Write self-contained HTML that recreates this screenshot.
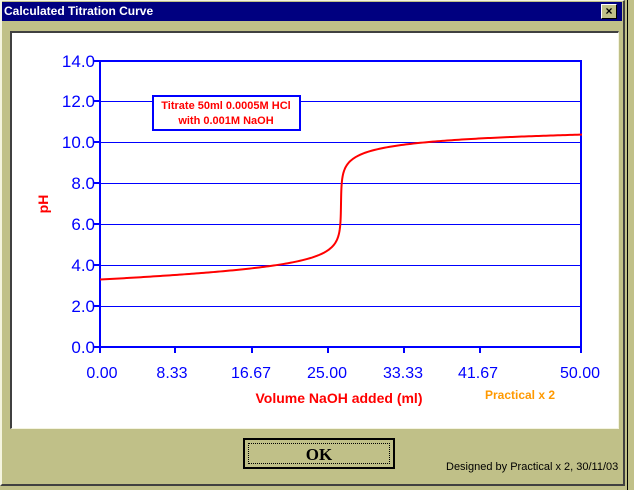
<!DOCTYPE html>
<html><head><style>
body{margin:0;width:634px;height:490px;overflow:hidden;background:#c0c088;font-family:"Liberation Sans",sans-serif;position:relative}
.outer{position:absolute;left:0;top:0;width:625px;height:486px;border-left:2px solid #f4f4e0;border-top:1px solid #f4f4e0;border-right:2px solid #404040;border-bottom:2px solid #404040;box-sizing:border-box}
.rt{position:absolute;left:627px;top:0;width:7px;height:490px;background:#c0c088;border-left:1px solid #000}
.title{position:absolute;left:2px;top:2px;width:620px;height:19px;background:#000080;color:#fff;font-weight:bold;font-size:12px;line-height:19px;padding-left:2px;box-sizing:border-box}
.x{position:absolute;right:5px;top:2px;width:14px;height:13px;background:#c0c088;border:1px solid;border-color:#fff #000 #000 #fff;color:#000;font-size:12px;line-height:12px;text-align:center;font-weight:bold}
.panel{position:absolute;left:10px;top:31px;width:609px;height:398px;background:#fff;border-left:2px solid #404040;border-top:2px solid #404040;border-right:1px solid #f4f4e0;border-bottom:1px solid #f4f4e0;box-sizing:border-box}
.ok{position:absolute;left:243px;top:438px;width:152px;height:31px;border:2px solid #000;box-sizing:border-box;background:#c0c088}
.ok div{position:absolute;left:3px;top:3px;right:3px;bottom:3px;border:1px dotted #000;font-family:"Liberation Serif",serif;font-weight:bold;font-size:17px;text-align:center;line-height:22px}
.des{position:absolute;left:446px;top:461px;font-size:11px;color:#000}
</style></head><body>
<div class="outer"></div><div class="rt"></div>
<div class="title">Calculated Titration Curve<div class="x">×</div></div>
<div class="panel"></div>
<svg style="position:absolute;left:0;top:0" width="634" height="490" font-family="Liberation Sans, sans-serif" shape-rendering="crispEdges">
<g stroke="#0000ff" stroke-width="1">
<line x1="100" x2="581" y1="101.5" y2="101.5"/><line x1="100" x2="581" y1="142.5" y2="142.5"/><line x1="100" x2="581" y1="183.5" y2="183.5"/><line x1="100" x2="581" y1="224.5" y2="224.5"/><line x1="100" x2="581" y1="265.5" y2="265.5"/><line x1="100" x2="581" y1="306.5" y2="306.5"/>
</g>
<rect x="100" y="61" width="481" height="286" fill="none" stroke="#0000ff" stroke-width="2"/>
<g stroke="#0000ff" stroke-width="2">
<line x1="94" x2="100" y1="61" y2="61"/><line x1="94" x2="100" y1="101" y2="101"/><line x1="94" x2="100" y1="142" y2="142"/><line x1="94" x2="100" y1="183" y2="183"/><line x1="94" x2="100" y1="224" y2="224"/><line x1="94" x2="100" y1="265" y2="265"/><line x1="94" x2="100" y1="306" y2="306"/><line x1="94" x2="100" y1="347" y2="347"/>
<line x1="100" x2="100" y1="347" y2="353"/><line x1="175" x2="175" y1="347" y2="353"/><line x1="252" x2="252" y1="347" y2="353"/><line x1="328" x2="328" y1="347" y2="353"/><line x1="404" x2="404" y1="347" y2="353"/><line x1="480" x2="480" y1="347" y2="353"/><line x1="581" x2="581" y1="347" y2="353"/>
</g>
<g fill="#0000ff" font-size="17" text-anchor="end" shape-rendering="auto">
<text x="95" y="67">14.0</text><text x="95" y="107">12.0</text><text x="95" y="148">10.0</text><text x="95" y="189">8.0</text><text x="95" y="230">6.0</text><text x="95" y="271">4.0</text><text x="95" y="312">2.0</text><text x="95" y="353">0.0</text>
</g>
<g fill="#0000ff" font-size="16" text-anchor="middle">
<text x="102" y="378">0.00</text><text x="172" y="378">8.33</text><text x="251" y="378">16.67</text><text x="327" y="378">25.00</text><text x="403" y="378">33.33</text><text x="478" y="378">41.67</text><text x="580" y="378">50.00</text>
</g>
<text x="339" y="403" fill="#ff0000" font-size="14" font-weight="bold" text-anchor="middle">Volume NaOH added (ml)</text>
<text x="520" y="399" fill="#ff9900" font-size="12" font-weight="bold" text-anchor="middle">Practical x 2</text>
<text transform="translate(48,204) rotate(-90)" fill="#ff0000" font-size="14" font-weight="bold" text-anchor="middle">pH</text>
<rect x="153" y="96" width="147" height="34" fill="#fff" stroke="#0000ff" stroke-width="2"/>
<text x="226" y="109" fill="#ff0000" font-size="11" font-weight="bold" text-anchor="middle">Titrate 50ml 0.0005M HCl</text>
<text x="226" y="124" fill="#ff0000" font-size="11" font-weight="bold" text-anchor="middle">with 0.001M NaOH</text>
<path id="c" fill="none" stroke="#ff0000" stroke-width="2" shape-rendering="auto"/>
</svg>
<script>
var p=[];function ph(V){var d=(0.025-0.001*V)/(50+V);var h=d/2+Math.sqrt(d*d/4+1e-14);return -Math.log10(h);}
var vs=[];for(var v=0;v<=50.0001;v+=0.25){vs.push(v);}for(var v=24;v<=26;v+=0.01){vs.push(v);}vs.sort(function(a,b){return a-b});
for(var i=0;i<vs.length;i++){var x=100+vs[i]*9.64,y=347-ph(vs[i])*286/14;p.push((i?"L":"M")+x.toFixed(2)+" "+y.toFixed(2));}
document.getElementById("c").setAttribute("d",p.join(""));
</script>
<div class="ok"><div>OK</div></div>
<div class="des">Designed by Practical x 2, 30/11/03</div>
</body></html>
